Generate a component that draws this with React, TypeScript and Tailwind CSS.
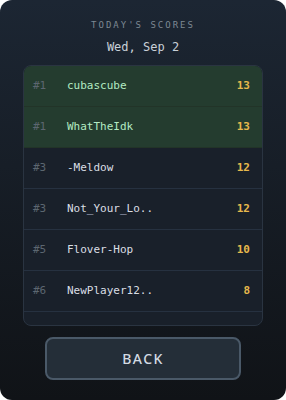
const scores = [
  { rank: 1, name: "cubascube", score: 13, me: true },
  { rank: 1, name: "WhatTheIdk", score: 13, me: true },
  { rank: 3, name: "-Meldow", score: 12 },
  { rank: 3, name: "Not_Your_Lo..", score: 12 },
  { rank: 5, name: "Flover-Hop", score: 10 },
  { rank: 6, name: "NewPlayer12..", score: 8 },
  { rank: 0, name: "", score: 0 },
];

export default function App() {
  return (
    <div className="w-[286px] h-[400px] bg-white">
      <div className="w-full h-full rounded-xl bg-gradient-to-b from-[#1c2633] to-[#101317] flex flex-col items-center pt-[21px]">
        <p
          className="text-[9px] tracking-[2px] text-[#7d8893] leading-none"
          style={{ fontFamily: '"DejaVu Sans Mono", monospace' }}
        >
          TODAY'S SCORES
        </p>
        <p
          className="mt-[11px] text-[12px] text-[#c9d0d8] leading-none"
          style={{ fontFamily: '"DejaVu Sans Mono", monospace' }}
        >
          Wed, Sep 2
        </p>

        {/* Score list */}
        <div className="mt-[12px] w-[240px] h-[261px] rounded-lg border border-[#2a3441] bg-[#19202a] overflow-hidden">
          {scores.map((s, i) => (
            <div
              key={i}
              className={
                "h-[41px] flex items-center pl-[9px] pr-[12px] border-b " +
                (s.me ? "bg-[#243c2f] border-[#223428]" : "border-[#263140]")
              }
              style={{ fontFamily: '"DejaVu Sans Mono", monospace' }}
            >
              <span className="w-[34px] text-[11px] text-[#5c6670]">{s.rank ? "#" + s.rank : ""}</span>
              <span className={"flex-1 text-[11px] " + (s.me ? "text-[#b3ebc3]" : "text-[#d9dee4]")}>
                {s.name}
              </span>
              <span className="text-[11px] font-bold text-[#e6b84c]">{s.score || ""}</span>
            </div>
          ))}
        </div>

        <button
          className="mt-[11px] w-[196px] h-[43px] rounded-lg border-2 border-[#4a5968] bg-[#242e38] text-[#d3dbe3] text-[14px] font-medium tracking-[0.1em]"
          style={{ fontFamily: '"Noto Sans", sans-serif' }}
        >
          BACK
        </button>
      </div>
    </div>
  );
}
